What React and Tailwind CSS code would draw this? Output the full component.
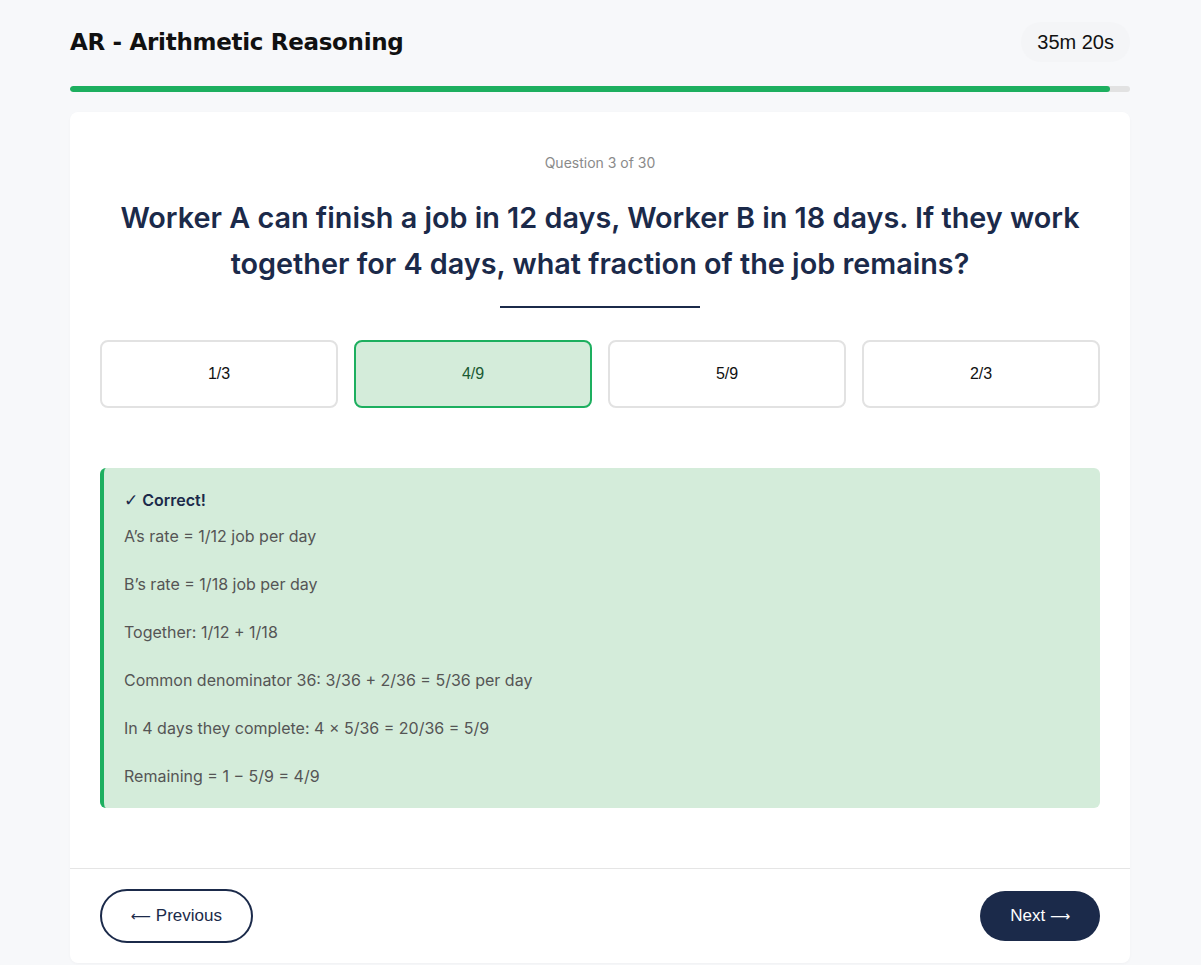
import React from 'react';

export default function App() {
  const options = ['1/3', '4/9', '5/9', '2/3'];
  const selected = '4/9';

  const steps = [
    'A’s rate = 1/12 job per day',
    'B’s rate = 1/18 job per day',
    'Together: 1/12 + 1/18',
    'Common denominator 36: 3/36 + 2/36 = 5/36 per day',
    'In 4 days they complete: 4 × 5/36 = 20/36 = 5/9',
    'Remaining = 1 − 5/9 = 4/9',
  ];

  return (
    <div className="min-h-[965px] bg-[#f7f8fa] font-['Inter',sans-serif]">
      <div className="w-[1060px] ml-[70px]">
        {/* Header */}
        <div className="flex items-center justify-between pt-[22px] h-[62px]">
          <h1 className="text-[23px] font-bold text-[#111] font-['DejaVu_Sans',sans-serif] tracking-[-0.3px]">
            AR - Arithmetic Reasoning
          </h1>
          <div className="bg-[#f4f5f7] rounded-full px-[16px] py-[9px] text-[20px] text-[#111] font-['Liberation_Sans',Arial,sans-serif] leading-[22px]">
            35m 20s
          </div>
        </div>

        {/* Progress */}
        <div className="mt-[24px] h-[6px] rounded-full bg-[#e2e2e2] overflow-hidden">
          <div className="h-full bg-[#1daf5f] rounded-full w-[98.1%]" />
        </div>

        {/* Card */}
        <div className="mt-[20px] bg-white rounded-[8px] shadow-[0_1px_3px_rgba(0,0,0,0.03)]">
          <div className="px-[30px] pt-[41px]">
            <p className="text-center text-[14px] leading-[20px] text-[#8a8a8a]">Question 3 of 30</p>
            <h2 className="mt-[22px] text-center text-[28.8px] leading-[46px] font-semibold text-[#1b2a4a]">
              Worker A can finish a job in 12 days, Worker B in 18 days. If they work together for 4 days, what fraction of the job remains?
            </h2>
            <div className="mx-auto mt-[19px] w-[200px] h-[2px] bg-[#1b2a4a]" />

            <div className="mt-[32px] grid grid-cols-4 gap-[16px]">
              {options.map((o) => (
                <button
                  key={o}
                  className={`h-[68px] rounded-[8px] border-2 text-[16px] font-['Liberation_Sans',Arial,sans-serif] ${
                    o === selected
                      ? 'bg-[#d4ecda] border-[#1daf5f] text-[#1a5a33]'
                      : 'bg-white border-[#e2e2e2] text-[#111]'
                  }`}
                >
                  {o}
                </button>
              ))}
            </div>

            {/* Explanation */}
            <div className="mt-[60px] bg-[#d4ecda] border-l-4 border-[#1daf5f] rounded-[6px] pl-[20px] pr-[20px] pt-[20px] pb-[20px]">
              <p className="text-[16px] leading-[24px] font-semibold text-[#1b2a4a]">
                <span className="font-['DejaVu_Sans',sans-serif] font-bold text-[17px] leading-[24px]">✓</span> Correct!
              </p>
              <div className="mt-[12px] flex flex-col gap-[24px]">
                {steps.map((s) => (
                  <p key={s} className="text-[16px] leading-[24px] text-[#555]">{s}</p>
                ))}
              </div>
            </div>
          </div>

          {/* Footer */}
          <div className="mt-[60px] border-t border-[#e5e5e5] px-[30px] pt-[20px] pb-[20px] flex items-center justify-between font-['Liberation_Sans',Arial,sans-serif]">
            <button className="border-2 border-[#1b2a4a] rounded-full px-[29px] py-[15px] text-[17px] leading-[20px] text-[#1b2a4a] bg-white">
              <span className="font-['DejaVu_Sans',sans-serif] text-[14px] leading-[20px]">⟵</span> Previous
            </button>
            <button className="bg-[#1b2a4a] rounded-full px-[30px] py-[15px] text-[17px] leading-[20px] text-white">
              Next <span className="font-['DejaVu_Sans',sans-serif] text-[14px] leading-[20px]">⟶</span>
            </button>
          </div>
        </div>
      </div>
    </div>
  );
}
